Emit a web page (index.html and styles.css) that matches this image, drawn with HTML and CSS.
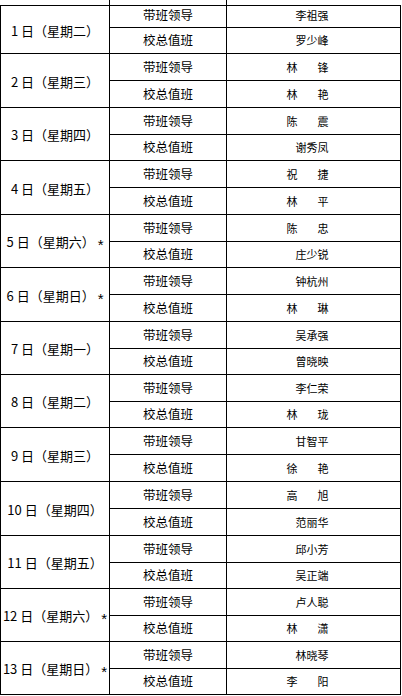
FILE: index.html
```html
<!DOCTYPE html>
<html lang="zh-CN">
<head>
<meta charset="utf-8">
<title>值班表</title>
<link rel="stylesheet" href="styles.css">
</head>
<body>
<div class="stub"><div></div><div class="v"></div><div class="v"></div></div>
<div class="sheet">
  <div class="date first">1 日（星期二）</div>
  <div class="role r1">带班领导</div><div class="name r1">李祖强</div>
  <div class="role">校总值班</div><div class="name">罗少峰</div>

  <div class="date">2 日（星期三）</div>
  <div class="role">带班领导</div><div class="name n2">林<span class="gap"></span>锋</div>
  <div class="role">校总值班</div><div class="name n2">林<span class="gap"></span>艳</div>

  <div class="date">3 日（星期四）</div>
  <div class="role">带班领导</div><div class="name n2">陈<span class="gap"></span>震</div>
  <div class="role">校总值班</div><div class="name">谢秀凤</div>

  <div class="date">4 日（星期五）</div>
  <div class="role">带班领导</div><div class="name n2">祝<span class="gap"></span>捷</div>
  <div class="role">校总值班</div><div class="name n2">林<span class="gap"></span>平</div>

  <div class="date">5 日（星期六）<span class="star">*</span></div>
  <div class="role">带班领导</div><div class="name n2">陈<span class="gap"></span>忠</div>
  <div class="role">校总值班</div><div class="name">庄少锐</div>

  <div class="date">6 日（星期日）<span class="star">*</span></div>
  <div class="role">带班领导</div><div class="name">钟杭州</div>
  <div class="role">校总值班</div><div class="name n2">林<span class="gap"></span>琳</div>

  <div class="date">7 日（星期一）</div>
  <div class="role">带班领导</div><div class="name">吴承强</div>
  <div class="role">校总值班</div><div class="name">曾晓映</div>

  <div class="date">8 日（星期二）</div>
  <div class="role">带班领导</div><div class="name">李仁荣</div>
  <div class="role">校总值班</div><div class="name n2">林<span class="gap"></span>珑</div>

  <div class="date">9 日（星期三）</div>
  <div class="role">带班领导</div><div class="name">甘智平</div>
  <div class="role">校总值班</div><div class="name n2">徐<span class="gap"></span>艳</div>

  <div class="date">10 日（星期四）</div>
  <div class="role">带班领导</div><div class="name n2">高<span class="gap"></span>旭</div>
  <div class="role">校总值班</div><div class="name">范丽华</div>

  <div class="date">11 日（星期五）</div>
  <div class="role">带班领导</div><div class="name">邱小芳</div>
  <div class="role">校总值班</div><div class="name">吴正端</div>

  <div class="date">12 日（星期六）<span class="star">*</span></div>
  <div class="role">带班领导</div><div class="name">卢人聪</div>
  <div class="role">校总值班</div><div class="name n2">林<span class="gap"></span>潇</div>

  <div class="date">13 日（星期日）<span class="star">*</span></div>
  <div class="role">带班领导</div><div class="name">林晓琴</div>
  <div class="role">校总值班</div><div class="name n2">李<span class="gap"></span>阳</div>
</div>
</body>
</html>
```

FILE: styles.css
```css
html, body {
  margin: 0;
  padding: 0;
  background: #fff;
}

body {
  font-family: "Noto Sans CJK SC", "Liberation Sans", sans-serif;
  color: #000;
  width: 402px;
  height: 696px;
  overflow: hidden;
}

.stub {
  display: grid;
  grid-template-columns: 109px 117px 174px;
  height: 5px;
}

.stub .v {
  border-left: 1px solid #000;
}

.sheet {
  display: grid;
  width: 399px;
  grid-template-columns: 108px 116px 173px;
  grid-template-rows:
    21px 25px
    26px 26px 26px 25px 26px 26px 26px 25px
    26px 26px 26px 25px 26px 25px 26px 26px
    26px 26px 26px 25px 26px 25px 26px 25px;
  gap: 1px;
  padding: 1px;
  background: #000;
}

.sheet > div {
  background: #fff;
  display: flex;
  align-items: center;
  justify-content: center;
  white-space: pre;
  line-height: 1;
}

.date {
  grid-row: span 2;
  font-size: 13px;
  padding-top: 1px;
}

.star {
  display: inline-block;
  margin-left: 3px;
  font-family: "Liberation Sans", sans-serif;
  font-size: 15px;
  position: relative;
  top: 3px;
}

.role {
  font-size: 12.5px;
}

.name {
  font-size: 11px;
  padding-right: 3px;
}

.r1 {
  padding-bottom: 3px;
}

.name.n2 {
  padding-right: 12px;
}

.gap {
  display: inline-block;
  width: 20px;
}
```
